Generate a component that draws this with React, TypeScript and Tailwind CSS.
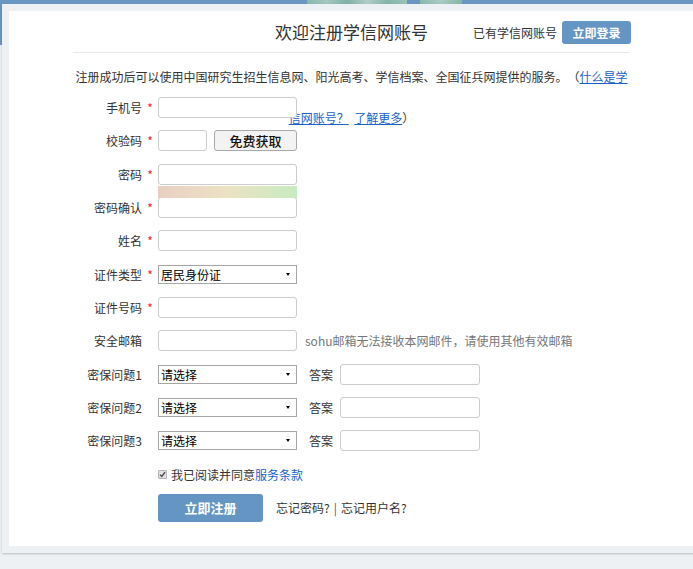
import React from "react";

const FONT = "font-['Noto_Sans_CJK_SC','Liberation_Sans',sans-serif]";

function Input({ w = "w-[139px]" }: { w?: string }) {
  return (
    <input
      type="text"
      readOnly
      className={`${w} h-[21px] rounded-[3px] border border-[#cccccc] bg-white outline-none`}
    />
  );
}

function Select({ text }: { text: string }) {
  return (
    <div className="flex h-[19px] w-[139px] items-center justify-between border border-[#a6a6a6] bg-white pl-[2px] pr-[6px]">
      <span className="text-[12px] leading-[17px] text-black">{text}</span>
      <span className="h-0 w-0 border-l-[2px] border-r-[2px] border-t-[3px] border-l-transparent border-r-transparent border-t-black" />
    </div>
  );
}

function Row({
  label,
  star,
  children,
}: {
  label: string;
  star?: boolean;
  children: React.ReactNode;
}) {
  return (
    <div className="h-[33.33px]">
      <div className="flex h-[21px] items-center">
        <span className="w-[69px] text-right text-[12px] leading-[21px] text-[#333]">{label}</span>
        <span className="w-[16px] text-center text-[12px] leading-[21px] text-[#ff2020]">
          {star ? "*" : ""}
        </span>
        {children}
      </div>
    </div>
  );
}

function Question({ n }: { n: number }) {
  return (
    <Row label={`密保问题${n}`}>
      <Select text="请选择" />
      <span className="ml-[12px] text-[12px] leading-[21px] text-[#333]">答案</span>
      <div className="ml-[7px]">
        <Input w="w-[140px]" />
      </div>
    </Row>
  );
}

export default function App() {
  return (
    <div className={`relative min-h-[569px] overflow-hidden bg-[#eef1f4] ${FONT}`}>
      {/* top banner */}
      <div className="relative h-[45px] bg-[#6a97c2]">
        <div className="absolute left-[307px] top-0 h-[4px] w-[100px] bg-[linear-gradient(90deg,#8ab8ad,#a4c8bd_20%,#7fb0a6_40%,#b0cfc5_60%,#86b5aa_80%,#9cc3b8)]" />
        <div className="absolute left-[420px] top-0 h-[4px] w-[42px] bg-[linear-gradient(90deg,#8ab8ad,#a9cbc1_50%,#86b5aa)]" />
      </div>

      {/* card */}
      <div className="relative -mt-[41px] ml-[2px] w-[760px] bg-[#eef1f4] p-[7px] shadow-[0_1px_2px_rgba(0,0,0,0.22)]">
        <div className="h-[535px] bg-white">
          <div className="ml-[64px] w-[557px]">
            {/* header */}
            <div className="relative flex h-[42px] items-center justify-center border-b border-[#e8e8e8]">
              <h1 className="text-[17px] font-normal leading-[20px] text-[#333]">欢迎注册学信网账号</h1>
              <div className="absolute right-[-1px] top-[10px] flex items-center">
                <span className="text-[12px] leading-[22px] text-[#333]">已有学信网账号</span>
                <button className="ml-[5px] h-[23px] w-[69px] rounded-[3px] bg-[#6595c2] text-[12px] font-bold leading-[23px] text-white">
                  立即登录
                </button>
              </div>
            </div>

            {/* description */}
            <p className="mt-[3px] h-[41px] text-center text-[12px] leading-[41px] text-[#333] [text-spacing-trim:space-all]">
              注册成功后可以使用中国研究生招生信息网、阳光高考、学信档案、全国征兵网提供的服务。（
              <a className="text-[#1a63c6] underline">什么是学信网账号？</a>
              {"\u00a0\u00a0"}
              <a className="text-[#1a63c6] underline">了解更多</a>）
            </p>

            {/* form */}
            <div className="relative">
              <Row label="手机号" star>
                <Input />
              </Row>
              <Row label="校验码" star>
                <Input w="w-[49px]" />
                <button className="ml-[7px] h-[21px] w-[83px] rounded-[3px] border border-[#a9a9a9] bg-[#f3f3f3] text-[13px] font-medium leading-[19px] text-[#111]">
                  免费获取
                </button>
              </Row>
              <Row label="密码" star>
                <div className="relative">
                  <Input />
                  <div className="absolute left-0 top-full h-[12px] w-[139px] bg-[linear-gradient(90deg,#e9cfc3,#ece2c3_50%,#c7ebc2)]" />
                </div>
              </Row>
              <Row label="密码确认" star>
                <Input />
              </Row>
              <Row label="姓名" star>
                <Input />
              </Row>
              <Row label="证件类型" star>
                <Select text="居民身份证" />
              </Row>
              <Row label="证件号码" star>
                <Input />
              </Row>
              <Row label="安全邮箱">
                <Input />
                <span className="ml-[8px] text-[12px] leading-[21px] text-[#777]">
                  sohu邮箱无法接收本网邮件，请使用其他有效邮箱
                </span>
              </Row>
              <Question n={1} />
              <Question n={2} />
              <Question n={3} />

              {/* agree */}
              <div className="flex h-[30px] items-start pl-[85px]">
                <div className="flex h-[21px] items-center">
                  <span className="flex h-[9px] w-[9px] items-center justify-center rounded-[1px] border border-[#b5b5b5] bg-[#e2e2e2]">
                    <svg width="7" height="7" viewBox="0 0 7 7">
                      <path d="M1 3.6 L2.8 5.4 L6 1.2" stroke="#444" strokeWidth="1.3" fill="none" />
                    </svg>
                  </span>
                  <span className="ml-[4px] text-[12px] leading-[21px] text-[#333]">
                    我已阅读并同意<a className="text-[#1a63c6]">服务条款</a>
                  </span>
                </div>
              </div>

              {/* submit */}
              <div className="flex items-center pl-[85px]">
                <button className="h-[28px] w-[105px] rounded-[3px] bg-[#6595c2] text-[13px] font-bold text-white">
                  立即注册
                </button>
                <span className="ml-[13px] text-[12px] leading-[20px] text-[#333]">
                  忘记密码?<span className="mx-[4px] text-[#8a4050]">|</span>忘记用户名?
                </span>
              </div>
            </div>
          </div>
        </div>
      </div>
    </div>
  );
}
